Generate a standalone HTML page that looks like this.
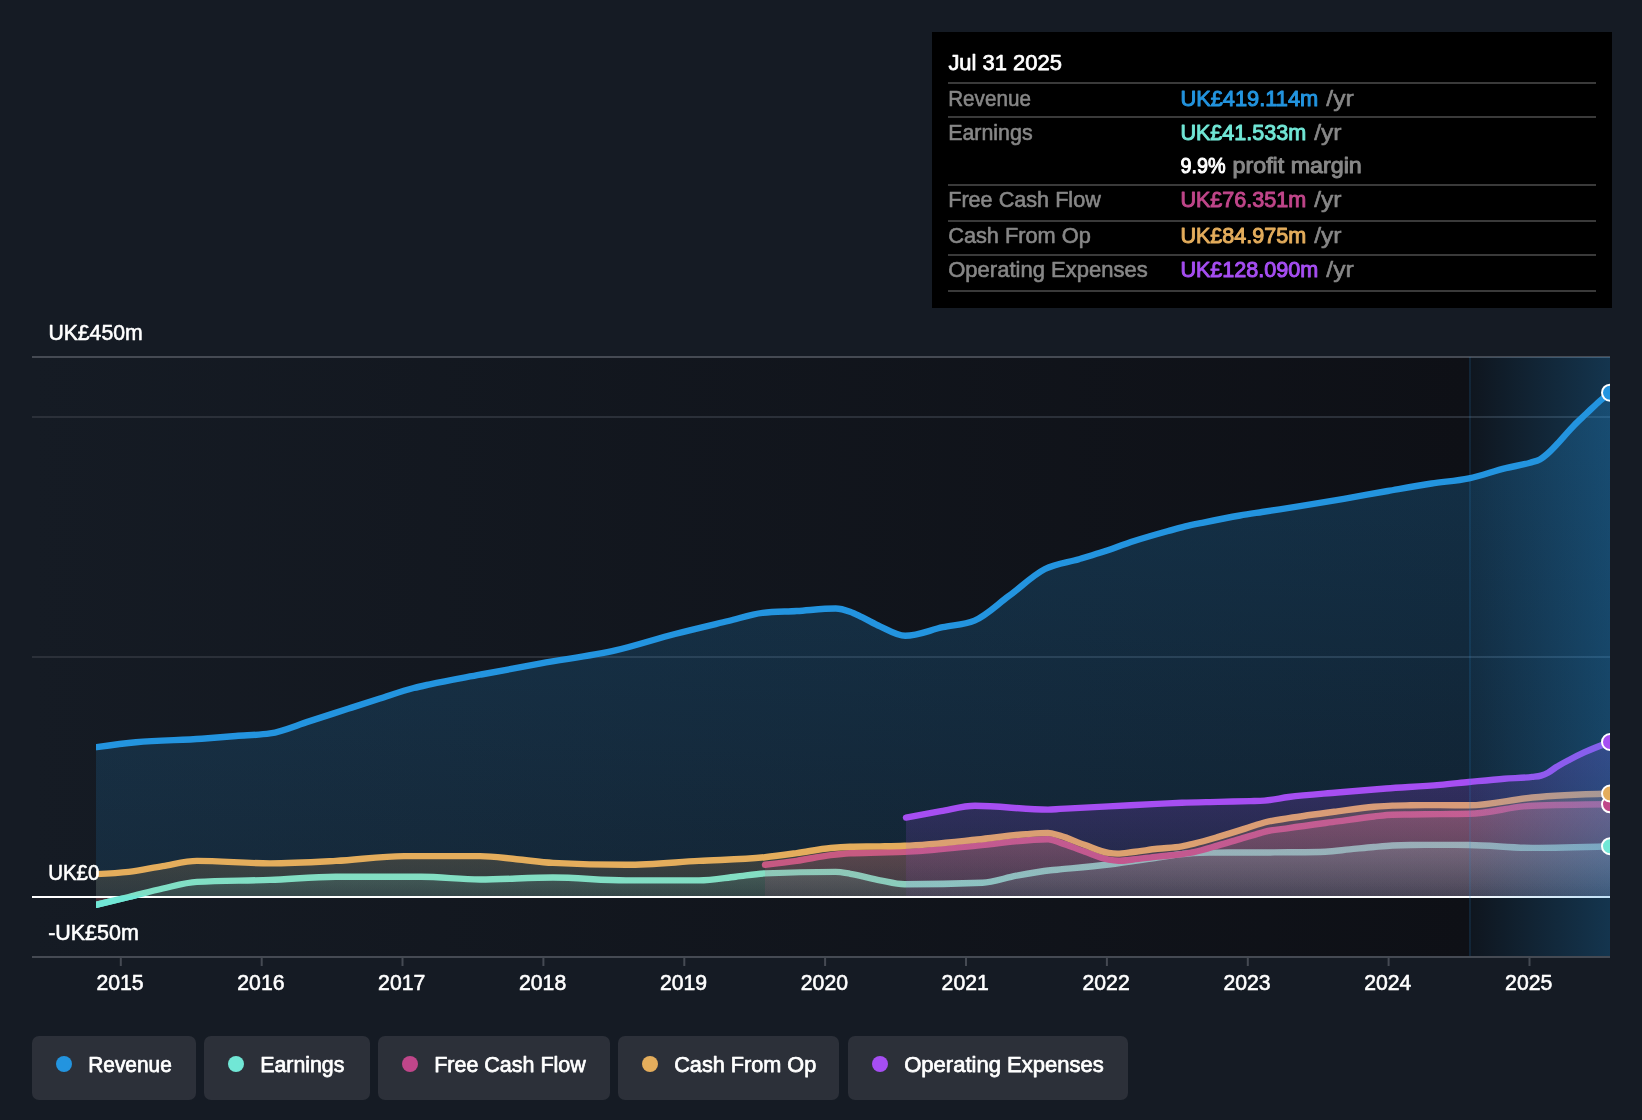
<!DOCTYPE html>
<html><head><meta charset="utf-8"><title>chart</title>
<style>html,body{margin:0;padding:0;background:#151b24;}body{width:1642px;height:1120px;position:relative;overflow:hidden;font-family:"Liberation Sans",sans-serif;}</style>
</head><body>
<svg width="1642" height="1120" viewBox="0 0 1642 1120" style="position:absolute;left:0;top:0;will-change:transform" font-family="Liberation Sans, sans-serif">
<defs>
<linearGradient id="bg" x1="0" x2="1" y1="0" y2="0"><stop offset="0" stop-color="#151b24"/><stop offset="1" stop-color="#0e1016"/></linearGradient>
<linearGradient id="hl" x1="0" x2="1" y1="0" y2="0"><stop offset="0" stop-color="#2394df" stop-opacity="0.04"/><stop offset="1" stop-color="#2394df" stop-opacity="0.28"/></linearGradient>
<linearGradient id="grev" x1="0" x2="0" y1="392" y2="897" gradientUnits="userSpaceOnUse"><stop offset="0" stop-color="#2394df" stop-opacity="0.25"/><stop offset="1" stop-color="#2394df" stop-opacity="0.13"/></linearGradient>
<linearGradient id="gearn" x1="0" x2="0" y1="845" y2="897" gradientUnits="userSpaceOnUse"><stop offset="0" stop-color="#71e7d6" stop-opacity="0.30"/><stop offset="1" stop-color="#71e7d6" stop-opacity="0.09"/></linearGradient>
<linearGradient id="gfcf" x1="0" x2="0" y1="804" y2="897" gradientUnits="userSpaceOnUse"><stop offset="0" stop-color="#c0468a" stop-opacity="0.33"/><stop offset="1" stop-color="#c0468a" stop-opacity="0.10"/></linearGradient>
<linearGradient id="gcash" x1="0" x2="0" y1="793" y2="897" gradientUnits="userSpaceOnUse"><stop offset="0" stop-color="#e4ad5c" stop-opacity="0.30"/><stop offset="1" stop-color="#e4ad5c" stop-opacity="0.12"/></linearGradient>
<linearGradient id="gopex" x1="0" x2="0" y1="742" y2="897" gradientUnits="userSpaceOnUse"><stop offset="0" stop-color="#a64ef2" stop-opacity="0.27"/><stop offset="1" stop-color="#a64ef2" stop-opacity="0.07"/></linearGradient>
<clipPath id="clip"><rect x="96" y="340" width="1514" height="640"/></clipPath>
</defs>
<rect x="32" y="357" width="1437" height="600" fill="url(#bg)"/>
<rect x="1469" y="357" width="141" height="600" fill="#0e1016"/>
<rect x="32" y="356" width="1578" height="2" fill="#454a53"/>
<rect x="32" y="416" width="1578" height="2" fill="#2b3039"/>
<rect x="32" y="656" width="1578" height="2" fill="#2b3039"/>
<g clip-path="url(#clip)">
<path d="M96.00,747.20C109.33,745.40 122.67,743.59 136.00,742.30C157.93,740.18 179.87,740.25 201.80,738.70C213.20,737.89 224.60,736.89 236.00,736.00C247.33,735.12 258.67,735.13 270.00,733.40C283.00,731.41 296.00,725.50 309.00,721.40C322.00,717.30 335.00,712.99 348.00,708.80C358.67,705.36 369.33,701.88 380.00,698.50C391.23,694.94 402.47,690.86 413.70,688.00C419.13,686.62 424.57,685.49 430.00,684.30C446.67,680.66 463.33,677.85 480.00,674.70C500.33,670.86 520.67,667.07 541.00,663.40C566.13,658.86 591.27,656.03 616.40,650.20C635.93,645.67 655.47,639.06 675.00,634.00C692.83,629.38 710.67,625.27 728.50,621.00C739.87,618.28 751.23,614.17 762.60,612.90C773.97,611.63 785.33,611.68 796.70,611.00C809.70,610.22 822.70,608.50 835.70,608.50C840.47,608.50 845.23,610.03 850.00,611.70C854.00,613.11 858.00,615.29 862.00,617.20C868.00,620.06 874.00,623.59 880.00,626.30C888.40,630.10 896.80,635.80 905.20,635.80C917.73,635.80 930.27,629.93 942.80,627.20C953.37,624.90 963.93,625.00 974.50,620.60C985.87,615.87 997.23,604.51 1008.60,596.20C1020.73,587.33 1032.87,575.19 1045.00,569.00C1056.33,563.22 1067.67,562.58 1079.00,559.20C1086.00,557.11 1093.00,555.04 1100.00,552.80C1111.37,549.16 1122.73,544.63 1134.10,541.00C1145.47,537.37 1156.83,534.15 1168.20,531.00C1173.90,529.42 1179.60,527.77 1185.30,526.40C1190.97,525.04 1196.63,523.97 1202.30,522.80C1214.87,520.21 1227.43,517.66 1240.00,515.50C1247.33,514.24 1254.67,513.15 1262.00,512.00C1274.67,510.01 1287.33,508.23 1300.00,506.20C1314.63,503.86 1329.27,501.34 1343.90,498.80C1358.50,496.27 1373.10,493.55 1387.70,491.00C1402.33,488.45 1416.97,485.75 1431.60,483.50C1444.07,481.58 1456.53,480.90 1469.00,478.30C1481.27,475.74 1493.53,471.09 1505.80,468.10C1513.90,466.12 1522.00,465.10 1530.10,462.70C1533.37,461.73 1536.63,461.37 1539.90,459.50C1542.33,458.11 1544.77,456.09 1547.20,454.00C1550.43,451.22 1553.67,447.73 1556.90,444.30C1560.17,440.83 1563.43,436.89 1566.70,433.30C1569.13,430.62 1571.57,427.91 1574.00,425.40C1578.07,421.20 1582.13,417.67 1586.20,413.80C1590.23,409.97 1594.27,405.87 1598.30,402.30C1602.20,398.85 1606.10,395.78 1610.00,392.70L1610.00,897 L96.00,897 Z" fill="url(#grev)"/>
<path d="M96.00,747.20C109.33,745.40 122.67,743.59 136.00,742.30C157.93,740.18 179.87,740.25 201.80,738.70C213.20,737.89 224.60,736.89 236.00,736.00C247.33,735.12 258.67,735.13 270.00,733.40C283.00,731.41 296.00,725.50 309.00,721.40C322.00,717.30 335.00,712.99 348.00,708.80C358.67,705.36 369.33,701.88 380.00,698.50C391.23,694.94 402.47,690.86 413.70,688.00C419.13,686.62 424.57,685.49 430.00,684.30C446.67,680.66 463.33,677.85 480.00,674.70C500.33,670.86 520.67,667.07 541.00,663.40C566.13,658.86 591.27,656.03 616.40,650.20C635.93,645.67 655.47,639.06 675.00,634.00C692.83,629.38 710.67,625.27 728.50,621.00C739.87,618.28 751.23,614.17 762.60,612.90C773.97,611.63 785.33,611.68 796.70,611.00C809.70,610.22 822.70,608.50 835.70,608.50C840.47,608.50 845.23,610.03 850.00,611.70C854.00,613.11 858.00,615.29 862.00,617.20C868.00,620.06 874.00,623.59 880.00,626.30C888.40,630.10 896.80,635.80 905.20,635.80C917.73,635.80 930.27,629.93 942.80,627.20C953.37,624.90 963.93,625.00 974.50,620.60C985.87,615.87 997.23,604.51 1008.60,596.20C1020.73,587.33 1032.87,575.19 1045.00,569.00C1056.33,563.22 1067.67,562.58 1079.00,559.20C1086.00,557.11 1093.00,555.04 1100.00,552.80C1111.37,549.16 1122.73,544.63 1134.10,541.00C1145.47,537.37 1156.83,534.15 1168.20,531.00C1173.90,529.42 1179.60,527.77 1185.30,526.40C1190.97,525.04 1196.63,523.97 1202.30,522.80C1214.87,520.21 1227.43,517.66 1240.00,515.50C1247.33,514.24 1254.67,513.15 1262.00,512.00C1274.67,510.01 1287.33,508.23 1300.00,506.20C1314.63,503.86 1329.27,501.34 1343.90,498.80C1358.50,496.27 1373.10,493.55 1387.70,491.00C1402.33,488.45 1416.97,485.75 1431.60,483.50C1444.07,481.58 1456.53,480.90 1469.00,478.30C1481.27,475.74 1493.53,471.09 1505.80,468.10C1513.90,466.12 1522.00,465.10 1530.10,462.70C1533.37,461.73 1536.63,461.37 1539.90,459.50C1542.33,458.11 1544.77,456.09 1547.20,454.00C1550.43,451.22 1553.67,447.73 1556.90,444.30C1560.17,440.83 1563.43,436.89 1566.70,433.30C1569.13,430.62 1571.57,427.91 1574.00,425.40C1578.07,421.20 1582.13,417.67 1586.20,413.80C1590.23,409.97 1594.27,405.87 1598.30,402.30C1602.20,398.85 1606.10,395.78 1610.00,392.70" fill="none" stroke="#2394df" stroke-width="6.4" stroke-linecap="round" stroke-linejoin="round"/>
<path d="M96.00,904.80C106.90,902.23 117.80,899.66 128.70,897.00C140.07,894.23 151.43,891.01 162.80,888.50C174.20,885.98 185.60,882.52 197.00,881.90C221.33,880.57 245.67,880.82 270.00,879.90C291.93,879.07 313.87,876.80 335.80,876.80C364.20,876.80 392.60,876.80 421.00,876.80C440.67,876.80 460.33,879.50 480.00,879.50C504.33,879.50 528.67,877.50 553.00,877.50C577.33,877.50 601.67,880.40 626.00,880.40C650.33,880.40 674.67,880.40 699.00,880.40C711.27,880.40 723.53,878.02 735.80,876.70C745.53,875.65 755.27,873.81 765.00,873.40C788.57,872.40 812.13,871.90 835.70,871.90C840.57,871.90 845.43,873.02 850.30,873.80C860.20,875.38 870.10,878.43 880.00,880.30C888.13,881.83 896.27,884.30 904.40,884.30C930.37,884.30 956.33,883.80 982.30,882.80C993.67,882.36 1005.03,877.78 1016.40,875.70C1027.77,873.62 1039.13,871.53 1050.50,870.30C1053.67,869.96 1056.83,869.70 1060.00,869.40C1076.23,867.85 1092.47,866.47 1108.70,864.50C1124.93,862.53 1141.17,859.92 1157.40,857.60C1165.53,856.44 1173.67,854.96 1181.80,854.10C1187.87,853.46 1193.93,852.77 1200.00,852.70C1206.10,852.63 1212.20,852.63 1218.30,852.60C1232.20,852.54 1246.10,852.57 1260.00,852.50C1269.57,852.45 1279.13,852.41 1288.70,852.30C1300.90,852.16 1313.10,852.10 1325.30,851.70C1333.40,851.43 1341.50,850.18 1349.60,849.40C1357.73,848.62 1365.87,847.72 1374.00,847.00C1380.10,846.46 1386.20,845.83 1392.30,845.50C1398.37,845.17 1404.43,845.04 1410.50,845.00C1420.33,844.93 1430.17,844.90 1440.00,844.90C1449.67,844.90 1459.33,844.93 1469.00,845.00C1490.10,845.15 1511.20,847.90 1532.30,847.90C1558.20,847.90 1584.10,847.05 1610.00,846.20L1610.00,897 L96.00,897 Z" fill="url(#gearn)"/>
<path d="M96.00,904.80C106.90,902.23 117.80,899.66 128.70,897.00C140.07,894.23 151.43,891.01 162.80,888.50C174.20,885.98 185.60,882.52 197.00,881.90C221.33,880.57 245.67,880.82 270.00,879.90C291.93,879.07 313.87,876.80 335.80,876.80C364.20,876.80 392.60,876.80 421.00,876.80C440.67,876.80 460.33,879.50 480.00,879.50C504.33,879.50 528.67,877.50 553.00,877.50C577.33,877.50 601.67,880.40 626.00,880.40C650.33,880.40 674.67,880.40 699.00,880.40C711.27,880.40 723.53,878.02 735.80,876.70C745.53,875.65 755.27,873.81 765.00,873.40C788.57,872.40 812.13,871.90 835.70,871.90C840.57,871.90 845.43,873.02 850.30,873.80C860.20,875.38 870.10,878.43 880.00,880.30C888.13,881.83 896.27,884.30 904.40,884.30C930.37,884.30 956.33,883.80 982.30,882.80C993.67,882.36 1005.03,877.78 1016.40,875.70C1027.77,873.62 1039.13,871.53 1050.50,870.30C1053.67,869.96 1056.83,869.70 1060.00,869.40C1076.23,867.85 1092.47,866.47 1108.70,864.50C1124.93,862.53 1141.17,859.92 1157.40,857.60C1165.53,856.44 1173.67,854.96 1181.80,854.10C1187.87,853.46 1193.93,852.77 1200.00,852.70C1206.10,852.63 1212.20,852.63 1218.30,852.60C1232.20,852.54 1246.10,852.57 1260.00,852.50C1269.57,852.45 1279.13,852.41 1288.70,852.30C1300.90,852.16 1313.10,852.10 1325.30,851.70C1333.40,851.43 1341.50,850.18 1349.60,849.40C1357.73,848.62 1365.87,847.72 1374.00,847.00C1380.10,846.46 1386.20,845.83 1392.30,845.50C1398.37,845.17 1404.43,845.04 1410.50,845.00C1420.33,844.93 1430.17,844.90 1440.00,844.90C1449.67,844.90 1459.33,844.93 1469.00,845.00C1490.10,845.15 1511.20,847.90 1532.30,847.90C1558.20,847.90 1584.10,847.05 1610.00,846.20" fill="none" stroke="#71e7d6" stroke-width="6.4" stroke-linecap="round" stroke-linejoin="round"/>
<path d="M765.00,864.80C775.57,863.57 786.13,862.34 796.70,860.80C808.07,859.14 819.43,856.47 830.80,855.10C837.20,854.33 843.60,853.64 850.00,853.30C860.00,852.77 870.00,852.76 880.00,852.50C888.13,852.29 896.27,852.23 904.40,851.90C928.73,850.93 953.07,847.75 977.40,845.60C1000.93,843.52 1024.47,839.20 1048.00,839.20C1052.00,839.20 1056.00,841.36 1060.00,842.60C1068.13,845.12 1076.27,848.64 1084.40,851.50C1092.50,854.34 1100.60,858.27 1108.70,859.70C1111.97,860.28 1115.23,860.80 1118.50,860.80C1123.33,860.80 1128.17,859.99 1133.00,859.50C1141.13,858.68 1149.27,857.48 1157.40,856.60C1165.53,855.72 1173.67,855.40 1181.80,854.20C1185.87,853.60 1189.93,852.94 1194.00,852.10C1202.10,850.43 1210.20,847.73 1218.30,845.40C1226.43,843.06 1234.57,840.46 1242.70,838.10C1247.13,836.81 1251.57,835.60 1256.00,834.30C1258.80,833.48 1261.60,832.53 1264.40,831.80C1272.50,829.69 1280.60,829.29 1288.70,828.10C1304.93,825.71 1321.17,823.60 1337.40,821.40C1349.60,819.75 1361.80,817.84 1374.00,816.50C1380.10,815.83 1386.20,814.83 1392.30,814.70C1398.37,814.57 1404.43,814.57 1410.50,814.50C1420.33,814.38 1430.17,814.22 1440.00,814.10C1449.67,813.98 1459.33,814.00 1469.00,813.80C1490.10,813.36 1511.20,806.46 1532.30,805.70C1558.20,804.77 1584.10,804.53 1610.00,804.30L1610.00,897 L765.00,897 Z" fill="url(#gfcf)"/>
<path d="M765.00,864.80C775.57,863.57 786.13,862.34 796.70,860.80C808.07,859.14 819.43,856.47 830.80,855.10C837.20,854.33 843.60,853.64 850.00,853.30C860.00,852.77 870.00,852.76 880.00,852.50C888.13,852.29 896.27,852.23 904.40,851.90C928.73,850.93 953.07,847.75 977.40,845.60C1000.93,843.52 1024.47,839.20 1048.00,839.20C1052.00,839.20 1056.00,841.36 1060.00,842.60C1068.13,845.12 1076.27,848.64 1084.40,851.50C1092.50,854.34 1100.60,858.27 1108.70,859.70C1111.97,860.28 1115.23,860.80 1118.50,860.80C1123.33,860.80 1128.17,859.99 1133.00,859.50C1141.13,858.68 1149.27,857.48 1157.40,856.60C1165.53,855.72 1173.67,855.40 1181.80,854.20C1185.87,853.60 1189.93,852.94 1194.00,852.10C1202.10,850.43 1210.20,847.73 1218.30,845.40C1226.43,843.06 1234.57,840.46 1242.70,838.10C1247.13,836.81 1251.57,835.60 1256.00,834.30C1258.80,833.48 1261.60,832.53 1264.40,831.80C1272.50,829.69 1280.60,829.29 1288.70,828.10C1304.93,825.71 1321.17,823.60 1337.40,821.40C1349.60,819.75 1361.80,817.84 1374.00,816.50C1380.10,815.83 1386.20,814.83 1392.30,814.70C1398.37,814.57 1404.43,814.57 1410.50,814.50C1420.33,814.38 1430.17,814.22 1440.00,814.10C1449.67,813.98 1459.33,814.00 1469.00,813.80C1490.10,813.36 1511.20,806.46 1532.30,805.70C1558.20,804.77 1584.10,804.53 1610.00,804.30" fill="none" stroke="#c0468a" stroke-width="6.4" stroke-linecap="round" stroke-linejoin="round"/>
<path d="M96.00,874.10C106.90,873.64 117.80,873.18 128.70,871.90C140.07,870.56 151.43,867.93 162.80,866.10C174.20,864.26 185.60,860.90 197.00,860.90C221.33,860.90 245.67,863.40 270.00,863.40C291.93,863.40 313.87,862.08 335.80,860.90C358.53,859.67 381.27,856.10 404.00,856.10C429.33,856.10 454.67,856.10 480.00,856.10C492.17,856.10 504.33,858.07 516.50,859.20C528.67,860.33 540.83,862.27 553.00,862.90C577.33,864.17 601.67,864.80 626.00,864.80C650.33,864.80 674.67,862.23 699.00,860.90C721.00,859.69 743.00,859.52 765.00,857.20C775.57,856.08 786.13,854.57 796.70,853.10C808.07,851.52 819.43,849.07 830.80,848.00C837.20,847.40 843.60,846.97 850.00,846.80C860.00,846.53 870.00,846.60 880.00,846.40C888.13,846.24 896.27,846.13 904.40,845.80C928.73,844.83 953.07,841.96 977.40,839.50C993.60,837.86 1009.80,835.27 1026.00,834.10C1033.33,833.57 1040.67,832.90 1048.00,832.90C1052.00,832.90 1056.00,834.58 1060.00,835.70C1068.13,837.97 1076.27,841.93 1084.40,844.80C1092.50,847.66 1100.60,851.71 1108.70,852.90C1111.57,853.32 1114.43,853.60 1117.30,853.60C1122.53,853.60 1127.77,852.59 1133.00,852.00C1141.13,851.08 1149.27,849.75 1157.40,848.80C1165.53,847.85 1173.67,847.78 1181.80,846.30C1185.87,845.56 1189.93,844.57 1194.00,843.60C1202.10,841.66 1210.20,839.26 1218.30,836.90C1226.43,834.53 1234.57,832.02 1242.70,829.40C1247.13,827.97 1251.57,826.38 1256.00,825.00C1258.80,824.13 1261.60,823.25 1264.40,822.50C1272.50,820.34 1280.60,819.54 1288.70,818.20C1304.93,815.52 1321.17,813.43 1337.40,811.30C1349.60,809.70 1361.80,807.83 1374.00,806.80C1380.10,806.28 1386.20,805.80 1392.30,805.60C1398.37,805.40 1404.43,805.38 1410.50,805.30C1420.33,805.17 1430.17,805.10 1440.00,805.10C1449.67,805.10 1459.33,805.30 1469.00,805.30C1490.10,805.30 1511.20,799.42 1532.30,797.50C1558.20,795.14 1584.10,794.32 1610.00,793.50L1610.00,897 L96.00,897 Z" fill="url(#gcash)"/>
<path d="M96.00,874.10C106.90,873.64 117.80,873.18 128.70,871.90C140.07,870.56 151.43,867.93 162.80,866.10C174.20,864.26 185.60,860.90 197.00,860.90C221.33,860.90 245.67,863.40 270.00,863.40C291.93,863.40 313.87,862.08 335.80,860.90C358.53,859.67 381.27,856.10 404.00,856.10C429.33,856.10 454.67,856.10 480.00,856.10C492.17,856.10 504.33,858.07 516.50,859.20C528.67,860.33 540.83,862.27 553.00,862.90C577.33,864.17 601.67,864.80 626.00,864.80C650.33,864.80 674.67,862.23 699.00,860.90C721.00,859.69 743.00,859.52 765.00,857.20C775.57,856.08 786.13,854.57 796.70,853.10C808.07,851.52 819.43,849.07 830.80,848.00C837.20,847.40 843.60,846.97 850.00,846.80C860.00,846.53 870.00,846.60 880.00,846.40C888.13,846.24 896.27,846.13 904.40,845.80C928.73,844.83 953.07,841.96 977.40,839.50C993.60,837.86 1009.80,835.27 1026.00,834.10C1033.33,833.57 1040.67,832.90 1048.00,832.90C1052.00,832.90 1056.00,834.58 1060.00,835.70C1068.13,837.97 1076.27,841.93 1084.40,844.80C1092.50,847.66 1100.60,851.71 1108.70,852.90C1111.57,853.32 1114.43,853.60 1117.30,853.60C1122.53,853.60 1127.77,852.59 1133.00,852.00C1141.13,851.08 1149.27,849.75 1157.40,848.80C1165.53,847.85 1173.67,847.78 1181.80,846.30C1185.87,845.56 1189.93,844.57 1194.00,843.60C1202.10,841.66 1210.20,839.26 1218.30,836.90C1226.43,834.53 1234.57,832.02 1242.70,829.40C1247.13,827.97 1251.57,826.38 1256.00,825.00C1258.80,824.13 1261.60,823.25 1264.40,822.50C1272.50,820.34 1280.60,819.54 1288.70,818.20C1304.93,815.52 1321.17,813.43 1337.40,811.30C1349.60,809.70 1361.80,807.83 1374.00,806.80C1380.10,806.28 1386.20,805.80 1392.30,805.60C1398.37,805.40 1404.43,805.38 1410.50,805.30C1420.33,805.17 1430.17,805.10 1440.00,805.10C1449.67,805.10 1459.33,805.30 1469.00,805.30C1490.10,805.30 1511.20,799.42 1532.30,797.50C1558.20,795.14 1584.10,794.32 1610.00,793.50" fill="none" stroke="#e4ad5c" stroke-width="6.4" stroke-linecap="round" stroke-linejoin="round"/>
<path d="M906.00,817.60C917.63,815.39 929.27,813.19 940.90,811.20C952.27,809.26 963.63,805.80 975.00,805.80C999.33,805.80 1023.67,809.60 1048.00,809.60C1052.00,809.60 1056.00,809.13 1060.00,808.90C1076.23,807.98 1092.47,807.23 1108.70,806.40C1124.93,805.57 1141.17,804.67 1157.40,803.90C1165.53,803.52 1173.67,803.10 1181.80,802.80C1193.97,802.35 1206.13,802.20 1218.30,801.90C1228.87,801.64 1239.43,801.44 1250.00,801.10C1254.80,800.95 1259.60,800.93 1264.40,800.60C1272.50,800.04 1280.60,798.05 1288.70,797.00C1304.93,794.90 1321.17,793.92 1337.40,792.50C1353.67,791.08 1369.93,789.72 1386.20,788.50C1404.13,787.16 1422.07,786.49 1440.00,784.90C1449.67,784.05 1459.33,782.94 1469.00,782.00C1480.77,780.86 1492.53,779.61 1504.30,778.70C1513.63,777.98 1522.97,778.10 1532.30,776.90C1535.20,776.53 1538.10,776.44 1541.00,775.60C1543.33,774.93 1545.67,774.05 1548.00,772.80C1550.67,771.38 1553.33,769.00 1556.00,767.30C1560.20,764.61 1564.40,762.44 1568.60,760.20C1573.97,757.33 1579.33,754.67 1584.70,752.20C1593.13,748.32 1601.57,745.16 1610.00,742.00L1610.00,897 L906.00,897 Z" fill="url(#gopex)"/>
<path d="M906.00,817.60C917.63,815.39 929.27,813.19 940.90,811.20C952.27,809.26 963.63,805.80 975.00,805.80C999.33,805.80 1023.67,809.60 1048.00,809.60C1052.00,809.60 1056.00,809.13 1060.00,808.90C1076.23,807.98 1092.47,807.23 1108.70,806.40C1124.93,805.57 1141.17,804.67 1157.40,803.90C1165.53,803.52 1173.67,803.10 1181.80,802.80C1193.97,802.35 1206.13,802.20 1218.30,801.90C1228.87,801.64 1239.43,801.44 1250.00,801.10C1254.80,800.95 1259.60,800.93 1264.40,800.60C1272.50,800.04 1280.60,798.05 1288.70,797.00C1304.93,794.90 1321.17,793.92 1337.40,792.50C1353.67,791.08 1369.93,789.72 1386.20,788.50C1404.13,787.16 1422.07,786.49 1440.00,784.90C1449.67,784.05 1459.33,782.94 1469.00,782.00C1480.77,780.86 1492.53,779.61 1504.30,778.70C1513.63,777.98 1522.97,778.10 1532.30,776.90C1535.20,776.53 1538.10,776.44 1541.00,775.60C1543.33,774.93 1545.67,774.05 1548.00,772.80C1550.67,771.38 1553.33,769.00 1556.00,767.30C1560.20,764.61 1564.40,762.44 1568.60,760.20C1573.97,757.33 1579.33,754.67 1584.70,752.20C1593.13,748.32 1601.57,745.16 1610.00,742.00" fill="none" stroke="#a64ef2" stroke-width="6.4" stroke-linecap="round" stroke-linejoin="round"/>
</g>
<rect x="32" y="896" width="1578" height="2" fill="#ffffff"/>
<clipPath id="neg"><rect x="96" y="898" width="60" height="20"/></clipPath>
<path d="M96.00,904.80C106.90,902.23 117.80,899.66 128.70,897.00C140.07,894.23 151.43,891.01 162.80,888.50C174.20,885.98 185.60,882.52 197.00,881.90C221.33,880.57 245.67,880.82 270.00,879.90C291.93,879.07 313.87,876.80 335.80,876.80C364.20,876.80 392.60,876.80 421.00,876.80C440.67,876.80 460.33,879.50 480.00,879.50C504.33,879.50 528.67,877.50 553.00,877.50C577.33,877.50 601.67,880.40 626.00,880.40C650.33,880.40 674.67,880.40 699.00,880.40C711.27,880.40 723.53,878.02 735.80,876.70C745.53,875.65 755.27,873.81 765.00,873.40C788.57,872.40 812.13,871.90 835.70,871.90C840.57,871.90 845.43,873.02 850.30,873.80C860.20,875.38 870.10,878.43 880.00,880.30C888.13,881.83 896.27,884.30 904.40,884.30C930.37,884.30 956.33,883.80 982.30,882.80C993.67,882.36 1005.03,877.78 1016.40,875.70C1027.77,873.62 1039.13,871.53 1050.50,870.30C1053.67,869.96 1056.83,869.70 1060.00,869.40C1076.23,867.85 1092.47,866.47 1108.70,864.50C1124.93,862.53 1141.17,859.92 1157.40,857.60C1165.53,856.44 1173.67,854.96 1181.80,854.10C1187.87,853.46 1193.93,852.77 1200.00,852.70C1206.10,852.63 1212.20,852.63 1218.30,852.60C1232.20,852.54 1246.10,852.57 1260.00,852.50C1269.57,852.45 1279.13,852.41 1288.70,852.30C1300.90,852.16 1313.10,852.10 1325.30,851.70C1333.40,851.43 1341.50,850.18 1349.60,849.40C1357.73,848.62 1365.87,847.72 1374.00,847.00C1380.10,846.46 1386.20,845.83 1392.30,845.50C1398.37,845.17 1404.43,845.04 1410.50,845.00C1420.33,844.93 1430.17,844.90 1440.00,844.90C1449.67,844.90 1459.33,844.93 1469.00,845.00C1490.10,845.15 1511.20,847.90 1532.30,847.90C1558.20,847.90 1584.10,847.05 1610.00,846.20L1610.00,897 L96.00,897 Z" fill="#e0404a" fill-opacity="0.22" clip-path="url(#neg)"/>
<clipPath id="lft"><rect x="96" y="895.5" width="60" height="30"/></clipPath>
<path d="M96.00,904.80C106.90,902.23 117.80,899.66 128.70,897.00C140.07,894.23 151.43,891.01 162.80,888.50C174.20,885.98 185.60,882.52 197.00,881.90C221.33,880.57 245.67,880.82 270.00,879.90C291.93,879.07 313.87,876.80 335.80,876.80C364.20,876.80 392.60,876.80 421.00,876.80C440.67,876.80 460.33,879.50 480.00,879.50C504.33,879.50 528.67,877.50 553.00,877.50C577.33,877.50 601.67,880.40 626.00,880.40C650.33,880.40 674.67,880.40 699.00,880.40C711.27,880.40 723.53,878.02 735.80,876.70C745.53,875.65 755.27,873.81 765.00,873.40C788.57,872.40 812.13,871.90 835.70,871.90C840.57,871.90 845.43,873.02 850.30,873.80C860.20,875.38 870.10,878.43 880.00,880.30C888.13,881.83 896.27,884.30 904.40,884.30C930.37,884.30 956.33,883.80 982.30,882.80C993.67,882.36 1005.03,877.78 1016.40,875.70C1027.77,873.62 1039.13,871.53 1050.50,870.30C1053.67,869.96 1056.83,869.70 1060.00,869.40C1076.23,867.85 1092.47,866.47 1108.70,864.50C1124.93,862.53 1141.17,859.92 1157.40,857.60C1165.53,856.44 1173.67,854.96 1181.80,854.10C1187.87,853.46 1193.93,852.77 1200.00,852.70C1206.10,852.63 1212.20,852.63 1218.30,852.60C1232.20,852.54 1246.10,852.57 1260.00,852.50C1269.57,852.45 1279.13,852.41 1288.70,852.30C1300.90,852.16 1313.10,852.10 1325.30,851.70C1333.40,851.43 1341.50,850.18 1349.60,849.40C1357.73,848.62 1365.87,847.72 1374.00,847.00C1380.10,846.46 1386.20,845.83 1392.30,845.50C1398.37,845.17 1404.43,845.04 1410.50,845.00C1420.33,844.93 1430.17,844.90 1440.00,844.90C1449.67,844.90 1459.33,844.93 1469.00,845.00C1490.10,845.15 1511.20,847.90 1532.30,847.90C1558.20,847.90 1584.10,847.05 1610.00,846.20" fill="none" stroke="#71e7d6" stroke-width="6.4" stroke-linecap="round" stroke-linejoin="round" clip-path="url(#lft)"/>
<rect x="1469" y="357" width="141" height="600" fill="url(#hl)"/>
<rect x="1469" y="357" width="2" height="600" fill="#2394df" fill-opacity="0.13"/>
<rect x="32" y="956" width="1578" height="2" fill="#454a53"/>
<rect x="119.8" y="957" width="2" height="9" fill="#454a53"/>
<text x="120.0" y="990.3" fill="#fff" stroke="#fff" stroke-width="0.60" stroke-linejoin="round" font-size="22.5" text-anchor="middle" textLength="47.2" lengthAdjust="spacingAndGlyphs">2015</text>
<rect x="260.7" y="957" width="2" height="9" fill="#454a53"/>
<text x="260.9" y="990.3" fill="#fff" stroke="#fff" stroke-width="0.60" stroke-linejoin="round" font-size="22.5" text-anchor="middle" textLength="47.2" lengthAdjust="spacingAndGlyphs">2016</text>
<rect x="401.5" y="957" width="2" height="9" fill="#454a53"/>
<text x="401.7" y="990.3" fill="#fff" stroke="#fff" stroke-width="0.60" stroke-linejoin="round" font-size="22.5" text-anchor="middle" textLength="47.2" lengthAdjust="spacingAndGlyphs">2017</text>
<rect x="542.4" y="957" width="2" height="9" fill="#454a53"/>
<text x="542.6" y="990.3" fill="#fff" stroke="#fff" stroke-width="0.60" stroke-linejoin="round" font-size="22.5" text-anchor="middle" textLength="47.2" lengthAdjust="spacingAndGlyphs">2018</text>
<rect x="683.3" y="957" width="2" height="9" fill="#454a53"/>
<text x="683.5" y="990.3" fill="#fff" stroke="#fff" stroke-width="0.60" stroke-linejoin="round" font-size="22.5" text-anchor="middle" textLength="47.2" lengthAdjust="spacingAndGlyphs">2019</text>
<rect x="824.1" y="957" width="2" height="9" fill="#454a53"/>
<text x="824.4" y="990.3" fill="#fff" stroke="#fff" stroke-width="0.60" stroke-linejoin="round" font-size="22.5" text-anchor="middle" textLength="47.2" lengthAdjust="spacingAndGlyphs">2020</text>
<rect x="965.0" y="957" width="2" height="9" fill="#454a53"/>
<text x="965.2" y="990.3" fill="#fff" stroke="#fff" stroke-width="0.60" stroke-linejoin="round" font-size="22.5" text-anchor="middle" textLength="47.2" lengthAdjust="spacingAndGlyphs">2021</text>
<rect x="1105.9" y="957" width="2" height="9" fill="#454a53"/>
<text x="1106.1" y="990.3" fill="#fff" stroke="#fff" stroke-width="0.60" stroke-linejoin="round" font-size="22.5" text-anchor="middle" textLength="47.2" lengthAdjust="spacingAndGlyphs">2022</text>
<rect x="1246.8" y="957" width="2" height="9" fill="#454a53"/>
<text x="1247.0" y="990.3" fill="#fff" stroke="#fff" stroke-width="0.60" stroke-linejoin="round" font-size="22.5" text-anchor="middle" textLength="47.2" lengthAdjust="spacingAndGlyphs">2023</text>
<rect x="1387.6" y="957" width="2" height="9" fill="#454a53"/>
<text x="1387.8" y="990.3" fill="#fff" stroke="#fff" stroke-width="0.60" stroke-linejoin="round" font-size="22.5" text-anchor="middle" textLength="47.2" lengthAdjust="spacingAndGlyphs">2024</text>
<rect x="1528.5" y="957" width="2" height="9" fill="#454a53"/>
<text x="1528.7" y="990.3" fill="#fff" stroke="#fff" stroke-width="0.60" stroke-linejoin="round" font-size="22.5" text-anchor="middle" textLength="47.2" lengthAdjust="spacingAndGlyphs">2025</text>
<g clip-path="url(#clip)">
<circle cx="1610" cy="392.7" r="8" fill="#2394df" stroke="#fff" stroke-width="2"/>
<circle cx="1610" cy="846.2" r="8" fill="#71e7d6" stroke="#fff" stroke-width="2"/>
<circle cx="1610" cy="804.3" r="8" fill="#c0468a" stroke="#fff" stroke-width="2"/>
<circle cx="1610" cy="793.5" r="8" fill="#e4ad5c" stroke="#fff" stroke-width="2"/>
<circle cx="1610" cy="742.0" r="8" fill="#a64ef2" stroke="#fff" stroke-width="2"/>
</g>
<text x="48.4" y="339.9" fill="#fff" stroke="#fff" stroke-width="0.60" stroke-linejoin="round" font-size="22.5" text-anchor="start" textLength="94.2" lengthAdjust="spacingAndGlyphs">UK£450m</text>
<text x="48.2" y="879.8" fill="#fff" stroke="#fff" stroke-width="0.60" stroke-linejoin="round" font-size="22.5" text-anchor="start" textLength="51.2" lengthAdjust="spacingAndGlyphs">UK£0</text>
<text x="48.2" y="939.7" fill="#fff" stroke="#fff" stroke-width="0.60" stroke-linejoin="round" font-size="22.5" text-anchor="start" textLength="90.6" lengthAdjust="spacingAndGlyphs">-UK£50m</text>
<rect x="932" y="32" width="680" height="276" fill="#000"/>
<text x="948.4" y="69.9" fill="#fff" stroke="#fff" stroke-width="0.75" stroke-linejoin="round" font-size="22.5" text-anchor="start" textLength="113.5" lengthAdjust="spacingAndGlyphs">Jul 31 2025</text>
<rect x="948" y="82.0" width="648" height="2" fill="#3a3a3a"/>
<rect x="948" y="116.0" width="648" height="2" fill="#3a3a3a"/>
<rect x="948" y="184.0" width="648" height="2" fill="#3a3a3a"/>
<rect x="948" y="220.0" width="648" height="2" fill="#3a3a3a"/>
<rect x="948" y="254.0" width="648" height="2" fill="#3a3a3a"/>
<rect x="948" y="290.0" width="648" height="2" fill="#3a3a3a"/>
<text x="948.2" y="105.5" fill="#878787" stroke="#878787" stroke-width="0.60" stroke-linejoin="round" font-size="22.5" text-anchor="start" textLength="82.7" lengthAdjust="spacingAndGlyphs">Revenue</text>
<text x="1180.4" y="105.5" fill="#2394df" stroke="#2394df" stroke-width="1.00" stroke-linejoin="round" font-size="22.5" text-anchor="start" textLength="137.9" lengthAdjust="spacingAndGlyphs">UK£419.114m</text>
<text x="1326.3" y="105.5" fill="#878787" stroke="#878787" stroke-width="0.60" stroke-linejoin="round" font-size="22.5" text-anchor="start" textLength="27.4" lengthAdjust="spacingAndGlyphs">/yr</text>
<text x="948.2" y="139.5" fill="#878787" stroke="#878787" stroke-width="0.60" stroke-linejoin="round" font-size="22.5" text-anchor="start" textLength="84.4" lengthAdjust="spacingAndGlyphs">Earnings</text>
<text x="1180.4" y="139.5" fill="#71e7d6" stroke="#71e7d6" stroke-width="1.00" stroke-linejoin="round" font-size="22.5" text-anchor="start" textLength="125.8" lengthAdjust="spacingAndGlyphs">UK£41.533m</text>
<text x="1314.2" y="139.5" fill="#878787" stroke="#878787" stroke-width="0.60" stroke-linejoin="round" font-size="22.5" text-anchor="start" textLength="27.4" lengthAdjust="spacingAndGlyphs">/yr</text>
<text x="948.2" y="207.4" fill="#878787" stroke="#878787" stroke-width="0.60" stroke-linejoin="round" font-size="22.5" text-anchor="start" textLength="152.6" lengthAdjust="spacingAndGlyphs">Free Cash Flow</text>
<text x="1180.4" y="207.4" fill="#c0468a" stroke="#c0468a" stroke-width="1.00" stroke-linejoin="round" font-size="22.5" text-anchor="start" textLength="125.8" lengthAdjust="spacingAndGlyphs">UK£76.351m</text>
<text x="1314.2" y="207.4" fill="#878787" stroke="#878787" stroke-width="0.60" stroke-linejoin="round" font-size="22.5" text-anchor="start" textLength="27.4" lengthAdjust="spacingAndGlyphs">/yr</text>
<text x="948.2" y="243.3" fill="#878787" stroke="#878787" stroke-width="0.60" stroke-linejoin="round" font-size="22.5" text-anchor="start" textLength="142.6" lengthAdjust="spacingAndGlyphs">Cash From Op</text>
<text x="1180.4" y="243.3" fill="#e4ad5c" stroke="#e4ad5c" stroke-width="1.00" stroke-linejoin="round" font-size="22.5" text-anchor="start" textLength="125.8" lengthAdjust="spacingAndGlyphs">UK£84.975m</text>
<text x="1314.2" y="243.3" fill="#878787" stroke="#878787" stroke-width="0.60" stroke-linejoin="round" font-size="22.5" text-anchor="start" textLength="27.4" lengthAdjust="spacingAndGlyphs">/yr</text>
<text x="948.2" y="277.3" fill="#878787" stroke="#878787" stroke-width="0.60" stroke-linejoin="round" font-size="22.5" text-anchor="start" textLength="199.6" lengthAdjust="spacingAndGlyphs">Operating Expenses</text>
<text x="1180.4" y="277.3" fill="#a64ef2" stroke="#a64ef2" stroke-width="1.00" stroke-linejoin="round" font-size="22.5" text-anchor="start" textLength="137.9" lengthAdjust="spacingAndGlyphs">UK£128.090m</text>
<text x="1326.3" y="277.3" fill="#878787" stroke="#878787" stroke-width="0.60" stroke-linejoin="round" font-size="22.5" text-anchor="start" textLength="27.4" lengthAdjust="spacingAndGlyphs">/yr</text>
<text x="1180.4" y="173.3" fill="#fff" stroke="#fff" stroke-width="1.00" stroke-linejoin="round" font-size="22.5" text-anchor="start" textLength="45.2" lengthAdjust="spacingAndGlyphs">9.9%</text>
<text x="1232.5" y="173.3" fill="#878787" stroke="#878787" stroke-width="1.00" stroke-linejoin="round" font-size="22.5" text-anchor="start" textLength="129.3" lengthAdjust="spacingAndGlyphs">profit margin</text>
<rect x="32" y="1036" width="164" height="64" rx="7" fill="#2c3039"/>
<circle cx="64" cy="1064" r="8" fill="#2394df"/>
<text x="88.2" y="1072.1" fill="#fff" stroke="#fff" stroke-width="0.75" stroke-linejoin="round" font-size="22.5" text-anchor="start" textLength="83.6" lengthAdjust="spacingAndGlyphs">Revenue</text>
<rect x="204" y="1036" width="166" height="64" rx="7" fill="#2c3039"/>
<circle cx="236" cy="1064" r="8" fill="#71e7d6"/>
<text x="260.2" y="1072.1" fill="#fff" stroke="#fff" stroke-width="0.75" stroke-linejoin="round" font-size="22.5" text-anchor="start" textLength="84.2" lengthAdjust="spacingAndGlyphs">Earnings</text>
<rect x="378" y="1036" width="232" height="64" rx="7" fill="#2c3039"/>
<circle cx="410" cy="1064" r="8" fill="#c0468a"/>
<text x="434.2" y="1072.1" fill="#fff" stroke="#fff" stroke-width="0.75" stroke-linejoin="round" font-size="22.5" text-anchor="start" textLength="151.6" lengthAdjust="spacingAndGlyphs">Free Cash Flow</text>
<rect x="618" y="1036" width="221" height="64" rx="7" fill="#2c3039"/>
<circle cx="650" cy="1064" r="8" fill="#e4ad5c"/>
<text x="674.2" y="1072.1" fill="#fff" stroke="#fff" stroke-width="0.75" stroke-linejoin="round" font-size="22.5" text-anchor="start" textLength="142.1" lengthAdjust="spacingAndGlyphs">Cash From Op</text>
<rect x="848" y="1036" width="280" height="64" rx="7" fill="#2c3039"/>
<circle cx="880" cy="1064" r="8" fill="#a64ef2"/>
<text x="904.2" y="1072.1" fill="#fff" stroke="#fff" stroke-width="0.75" stroke-linejoin="round" font-size="22.5" text-anchor="start" textLength="199.6" lengthAdjust="spacingAndGlyphs">Operating Expenses</text>
</svg>
</body></html>
